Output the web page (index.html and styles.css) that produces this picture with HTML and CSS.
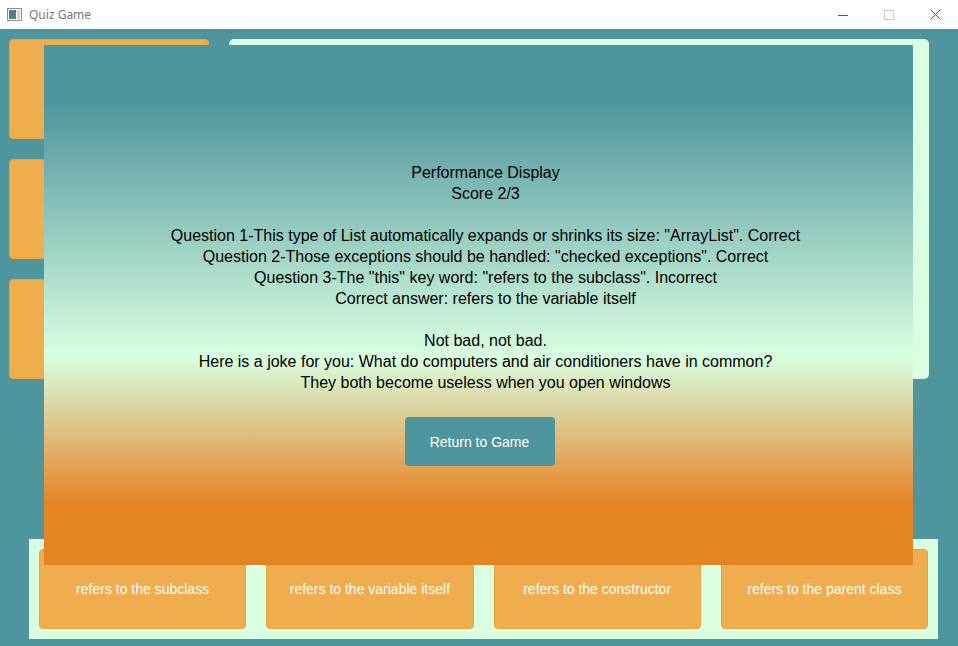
FILE: index.html
```html
<!DOCTYPE html>
<html lang="en">
<head>
<meta charset="utf-8">
<title>Quiz Game</title>
<link rel="stylesheet" href="styles.css">
</head>
<body>
<div class="window">
  <header class="titlebar">
    <svg class="app-icon" width="15" height="13" viewBox="0 0 15 13">
      <rect x="0.5" y="0.5" width="14" height="12" fill="#fff" stroke="#8a8a8a"/>
      <rect x="2" y="2" width="7" height="9" fill="#3f8f6a"/>
      <rect x="2" y="2" width="7" height="4" fill="#4a78b8"/>
      <rect x="10" y="2" width="3" height="9" fill="#c9d6e0"/>
    </svg>
    <span class="title">Quiz Game</span>
    <div class="controls">
      <span class="ctl"><svg width="10" height="10" viewBox="0 0 10 10"><path d="M0 5.5h10" stroke="#555" stroke-width="1"/></svg></span>
      <span class="ctl"><svg width="10" height="10" viewBox="0 0 10 10"><rect x="0.5" y="0.5" width="9" height="9" fill="none" stroke="#ccc"/></svg></span>
      <span class="ctl"><svg width="11" height="11" viewBox="0 0 11 11"><path d="M0.5 0.5l10 10M10.5 0.5l-10 10" stroke="#555" stroke-width="1"/></svg></span>
    </div>
  </header>
  <main class="app">
    <section class="top">
      <div class="side">
        <button class="btn-orange side-btn"></button>
        <button class="btn-orange side-btn"></button>
        <button class="btn-orange side-btn"></button>
      </div>
      <div class="panel"></div>
    </section>
    <section class="answers">
      <button class="btn-orange answer">refers to the subclass</button>
      <button class="btn-orange answer">refers to the variable itself</button>
      <button class="btn-orange answer">refers to the constructor</button>
      <button class="btn-orange answer">refers to the parent class</button>
    </section>
    <div class="overlay">
      <div class="report">
        <p>Performance Display</p>
        <p>Score 2/3</p>
        <p>&nbsp;</p>
        <p>Question 1-This type of List automatically expands or shrinks its size: "ArrayList". Correct</p>
        <p>Question 2-Those exceptions should be handled: "checked exceptions". Correct</p>
        <p>Question 3-The "this" key word: "refers to the subclass". Incorrect</p>
        <p>Correct answer: refers to the variable itself</p>
        <p>&nbsp;</p>
        <p>Not bad, not bad.</p>
        <p>Here is a joke for you: What do computers and air conditioners have in common?</p>
        <p>They both become useless when you open windows</p>
      </div>
      <button class="return-btn">Return to Game</button>
    </div>
  </main>
</div>
</body>
</html>
```

FILE: styles.css
```css
* { box-sizing: border-box; }
html, body {
  margin: 0;
  padding: 0;
  width: 958px;
  height: 646px;
  overflow: hidden;
  font-family: "Liberation Sans", Arial, sans-serif;
}
.window {
  width: 958px;
  height: 646px;
  display: flex;
  flex-direction: column;
}
.titlebar {
  height: 29px;
  background: #fff;
  display: flex;
  align-items: center;
  flex-shrink: 0;
}
.app-icon {
  margin-left: 7px;
}
.title {
  margin-left: 7px;
  font-family: "Noto Sans", "Open Sans", sans-serif;
  font-size: 12px;
  color: #777;
}
.controls {
  margin-left: auto;
  display: flex;
  height: 29px;
}
.ctl {
  width: 46px;
  display: flex;
  align-items: center;
  justify-content: center;
}
.app {
  position: relative;
  flex: 1;
  background: #4f959d;
  padding: 10px 9px;
}
.top {
  display: flex;
  gap: 20px;
  height: 340px;
}
.side {
  width: 200px;
  display: flex;
  flex-direction: column;
  gap: 20px;
}
.btn-orange {
  background: #f0ad4e;
  border: 1px solid #eea236;
  border-radius: 4px;
  color: #fff;
  font-family: "Liberation Sans", Arial, sans-serif;
  font-size: 14px;
  padding: 0;
}
.side-btn {
  height: 100px;
}
.panel {
  width: 700px;
  background: #d9ffe0;
  border-radius: 5px;
}
.answers {
  margin-top: 160px;
  margin-left: 20px;
  width: 909px;
  height: 100px;
  background: #d9ffe0;
  padding: 10px;
  display: flex;
  gap: 20px;
}
.answer {
  flex: 1;
  height: 80px;
}
.overlay {
  position: absolute;
  left: 44px;
  top: 16px;
  width: 869px;
  height: 520px;
  background: linear-gradient(to bottom, #4f959d 0%, #4f959d 11%, #d9ffe0 60%, #e58325 88%, #e58325 100%);
  display: flex;
  flex-direction: column;
  align-items: center;
  padding-top: 117px;
}
.report {
  padding-left: 14px;
  text-align: center;
  color: #000;
  font-size: 16px;
  line-height: 21px;
}
.report p {
  margin: 0;
}
.return-btn {
  margin-top: 24px;
  margin-left: 2px;
  width: 150px;
  height: 49px;
  background: #4f959d;
  border: none;
  border-radius: 4px;
  color: #fff;
  font-family: "Liberation Sans", Arial, sans-serif;
  font-size: 14px;
}
```
